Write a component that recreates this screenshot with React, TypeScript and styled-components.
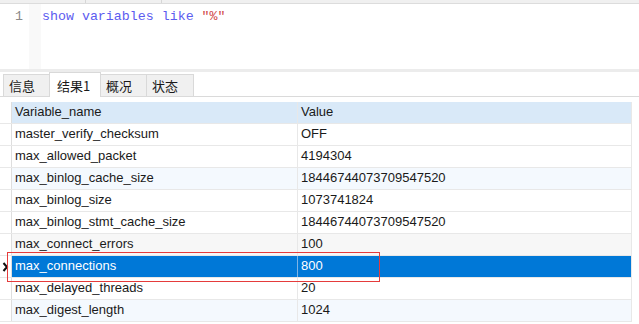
import React from "react";
import styled, { createGlobalStyle } from "styled-components";

const GlobalStyle = createGlobalStyle`
  html, body {
    margin: 0;
    padding: 0;
    background: #ffffff;
  }
  body {
    font-family: "Liberation Sans", "Noto Sans CJK SC", sans-serif;
    color: #1a1a1a;
  }
`;

const Page = styled.div`
  width: 639px;
  height: 324px;
  overflow: hidden;
  display: flex;
  flex-direction: column;
  background: #ffffff;
`;

const TopStrip = styled.div`
  height: 3px;
  background: #f0f0f0;
  border-bottom: 1px solid #dcdcdc;
  display: flex;
`;

const TopStripCell = styled.div<{ $w: number }>`
  width: ${(p) => p.$w}px;
  border-right: 1px solid #d6d6d6;
`;

const Editor = styled.div`
  height: 65px;
  display: flex;
`;

const LineNumbers = styled.div`
  width: 29px;
  box-sizing: border-box;
  text-align: right;
  font-family: "Liberation Mono", monospace;
  font-size: 13.3px;
  color: #8a8a8a;
  padding-top: 5px;
  padding-right: 6px;
`;

const FoldGutter = styled.div`
  width: 12px;
  background: #f9f9f9;
`;

const Code = styled.div`
  padding-left: 1px;
  padding-top: 5px;
  font-family: "Liberation Mono", monospace;
  font-size: 13.3px;
  color: #5c5cf0;
  white-space: pre;
`;

const Str = styled.span`
  color: #d04848;
`;

const Splitter = styled.div`
  height: 3px;
  background: #ececec;
`;

const TabBar = styled.div`
  height: 24px;
  display: flex;
  align-items: flex-end;
  padding-left: 3px;
  border-bottom: 1px solid #dadada;
`;

const Tab = styled.div<{ $active?: boolean; $w: number }>`
  width: ${(p) => p.$w}px;
  height: ${(p) => (p.$active ? 25 : 22)}px;
  box-sizing: border-box;
  background: ${(p) => (p.$active ? "#ffffff" : "#f0f0f0")};
  border: 1px solid #d9d9d9;
  border-bottom: none;
  margin-bottom: ${(p) => (p.$active ? -1 : 0)}px;
  margin-right: -1px;
  font-family: "Noto Sans CJK SC", "Liberation Sans", sans-serif;
  font-size: 13px;
  color: #1a1a1a;
  display: flex;
  align-items: center;
  padding-left: ${(p) => (p.$active ? 7 : 5)}px;
  position: relative;
  z-index: ${(p) => (p.$active ? 1 : 0)};
`;

const Spacer = styled.div`
  height: 5px;
`;

const Grid = styled.div`
  position: relative;
  width: 632px;
`;

const Row = styled.div<{ $bg: string }>`
  display: grid;
  grid-template-columns: 12px 286px 334px;
  height: 22px;
  box-sizing: border-box;
  border-bottom: 1px solid #e8e8e8;
  background: ${(p) => p.$bg};
`;

const Indicator = styled.div`
  background: #ffffff;
  border-right: 1px solid #dedede;
  display: flex;
  align-items: center;
  justify-content: center;
`;

const Cell = styled.div<{ $selected?: boolean; $last?: boolean }>`
  font-size: 13px;
  line-height: 20px;
  padding-left: 3px;
  white-space: nowrap;
  overflow: hidden;
  color: ${(p) => (p.$selected ? "#ffffff" : "#1a1a1a")};
  border-right: 1px solid
    ${(p) => (p.$selected ? (p.$last ? "#e8e8e8" : "#7fb4e6") : "#e8e8e8")};
`;

const Highlight = styled.div`
  position: absolute;
  left: 7px;
  top: 150px;
  width: 373px;
  height: 30px;
  box-sizing: border-box;
  border: 1px solid #e53b3b;
  pointer-events: none;
`;

const rows: { name: string; value: string; bg?: string; selected?: boolean }[] = [
  { name: "master_verify_checksum", value: "OFF" },
  { name: "max_allowed_packet", value: "4194304" },
  { name: "max_binlog_cache_size", value: "18446744073709547520", bg: "#f4f9fe" },
  { name: "max_binlog_size", value: "1073741824" },
  { name: "max_binlog_stmt_cache_size", value: "18446744073709547520" },
  { name: "max_connect_errors", value: "100", bg: "#f7f7f7" },
  { name: "max_connections", value: "800", selected: true },
  { name: "max_delayed_threads", value: "20" },
  { name: "max_digest_length", value: "1024", bg: "#f4f9fe" },
];

const Chevron = () => (
  <svg width="7" height="10" viewBox="0 0 7 10">
    <path d="M1.5 1 L5 5 L1.5 9" fill="none" stroke="#111" strokeWidth="2" />
  </svg>
);

export default function App() {
  return (
    <>
      <GlobalStyle />
      <Page>
        <TopStrip>
          <TopStripCell $w={85} />
          <TopStripCell $w={75} />
        </TopStrip>
        <Editor>
          <LineNumbers>1</LineNumbers>
          <FoldGutter />
          <Code>
            show variables like <Str>"%"</Str>
          </Code>
        </Editor>
        <Splitter />
        <TabBar>
          <Tab $w={47}>信息</Tab>
          <Tab $w={52} $active>
            结果1
          </Tab>
          <Tab $w={47}>概况</Tab>
          <Tab $w={48}>状态</Tab>
        </TabBar>
        <Spacer />
        <Grid>
          <Row $bg="#d9e9f8">
            <Indicator />
            <Cell>Variable_name</Cell>
            <Cell $last>Value</Cell>
          </Row>
          {rows.map((r) => (
            <Row key={r.name} $bg={r.selected ? "#0078d7" : r.bg ?? "#ffffff"}>
              <Indicator>{r.selected && <Chevron />}</Indicator>
              <Cell $selected={r.selected}>{r.name}</Cell>
              <Cell $selected={r.selected} $last>
                {r.value}
              </Cell>
            </Row>
          ))}
          <Highlight />
        </Grid>
      </Page>
    </>
  );
}
